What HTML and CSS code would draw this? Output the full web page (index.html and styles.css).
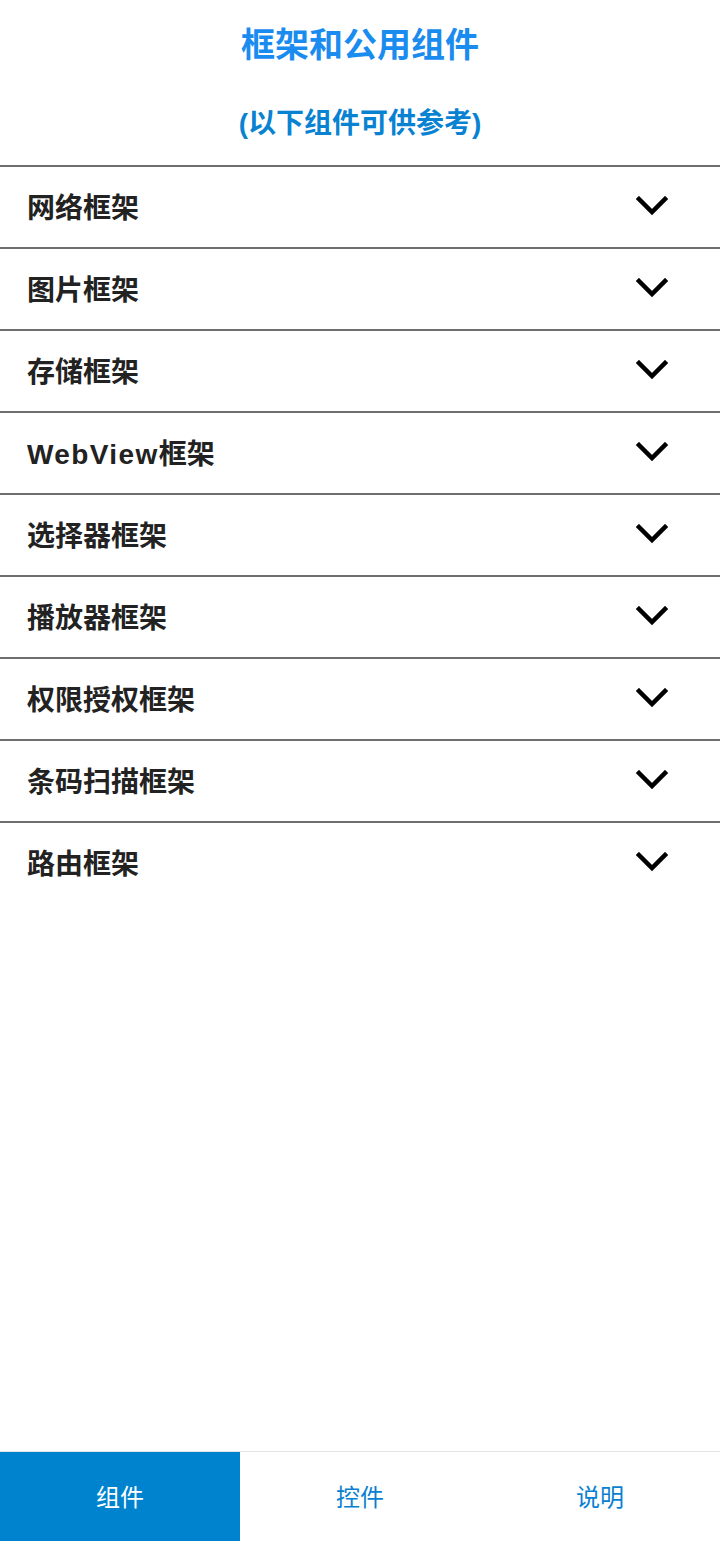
FILE: index.html
```html
<!DOCTYPE html>
<html lang="zh">
<head>
<meta charset="utf-8">
<link rel="stylesheet" href="styles.css">
</head>
<body>
<div class="app">
  <header class="header">
    <h1 class="title">框架和公用组件</h1>
    <p class="subtitle">(以下组件可供参考)</p>
  </header>
  <ul class="list">
    <li class="row"><span class="label">网络框架</span><svg class="chev" viewBox="0 0 32 20"><path d="M3 3 L16 16 L29 3" /></svg></li>
    <li class="row"><span class="label">图片框架</span><svg class="chev" viewBox="0 0 32 20"><path d="M3 3 L16 16 L29 3" /></svg></li>
    <li class="row"><span class="label">存储框架</span><svg class="chev" viewBox="0 0 32 20"><path d="M3 3 L16 16 L29 3" /></svg></li>
    <li class="row"><span class="label"><span class="latin">WebView</span>框架</span><svg class="chev" viewBox="0 0 32 20"><path d="M3 3 L16 16 L29 3" /></svg></li>
    <li class="row"><span class="label">选择器框架</span><svg class="chev" viewBox="0 0 32 20"><path d="M3 3 L16 16 L29 3" /></svg></li>
    <li class="row"><span class="label">播放器框架</span><svg class="chev" viewBox="0 0 32 20"><path d="M3 3 L16 16 L29 3" /></svg></li>
    <li class="row"><span class="label">权限授权框架</span><svg class="chev" viewBox="0 0 32 20"><path d="M3 3 L16 16 L29 3" /></svg></li>
    <li class="row"><span class="label">条码扫描框架</span><svg class="chev" viewBox="0 0 32 20"><path d="M3 3 L16 16 L29 3" /></svg></li>
    <li class="row last"><span class="label">路由框架</span><svg class="chev" viewBox="0 0 32 20"><path d="M3 3 L16 16 L29 3" /></svg></li>
  </ul>
  <div class="spacer"></div>
  <nav class="tabbar">
    <div class="tab active">组件</div>
    <div class="tab">控件</div>
    <div class="tab">说明</div>
  </nav>
</div>
</body>
</html>
```
FILE: styles.css
```css
html, body {
  margin: 0;
  padding: 0;
  background: #ffffff;
}
body {
  font-family: "Liberation Sans", "Noto Sans CJK SC", sans-serif;
}
.app {
  width: 720px;
  height: 1541px;
  display: flex;
  flex-direction: column;
  overflow: hidden;
}
.header {
  display: flex;
  flex-direction: column;
  align-items: center;
  padding-bottom: 5px;
}
.title {
  margin: 0;
  font-size: 34px;
  line-height: 90px;
  font-weight: bold;
  color: #1a8cef;
}
.subtitle {
  margin: 0;
  font-size: 28px;
  line-height: 68px;
  padding-bottom: 2px;
  font-weight: bold;
  color: #0a82d2;
}
.list {
  list-style: none;
  margin: 0;
  padding: 0;
  border-top: 2px solid #6e6e6e;
}
.row {
  height: 80px;
  display: flex;
  align-items: center;
  justify-content: space-between;
  padding: 0 52px 0 27px;
  border-bottom: 2px solid #6e6e6e;
}
.row.last {
  border-bottom: none;
}
.label {
  font-size: 28px;
  font-weight: bold;
  color: #222222;
  margin-top: -2px;
}
.latin {
  letter-spacing: 1.4px;
}
.chev {
  width: 32px;
  height: 20px;
  margin-top: -3px;
}
.chev path {
  fill: none;
  stroke: #000000;
  stroke-width: 4.5;
  stroke-linecap: square;
  stroke-linejoin: miter;
}
.spacer {
  flex: 1;
}
.tabbar {
  display: flex;
  height: 89px;
  border-top: 1px solid #e4e4e4;
}
.tab {
  flex: 1;
  display: flex;
  align-items: center;
  justify-content: center;
  font-size: 24px;
  color: #0a7fcf;
  font-family: "Noto Sans CJK SC", sans-serif;
  padding-bottom: 2px;
}
.tab.active {
  background: #0083cf;
  color: #ffffff;
}
```
